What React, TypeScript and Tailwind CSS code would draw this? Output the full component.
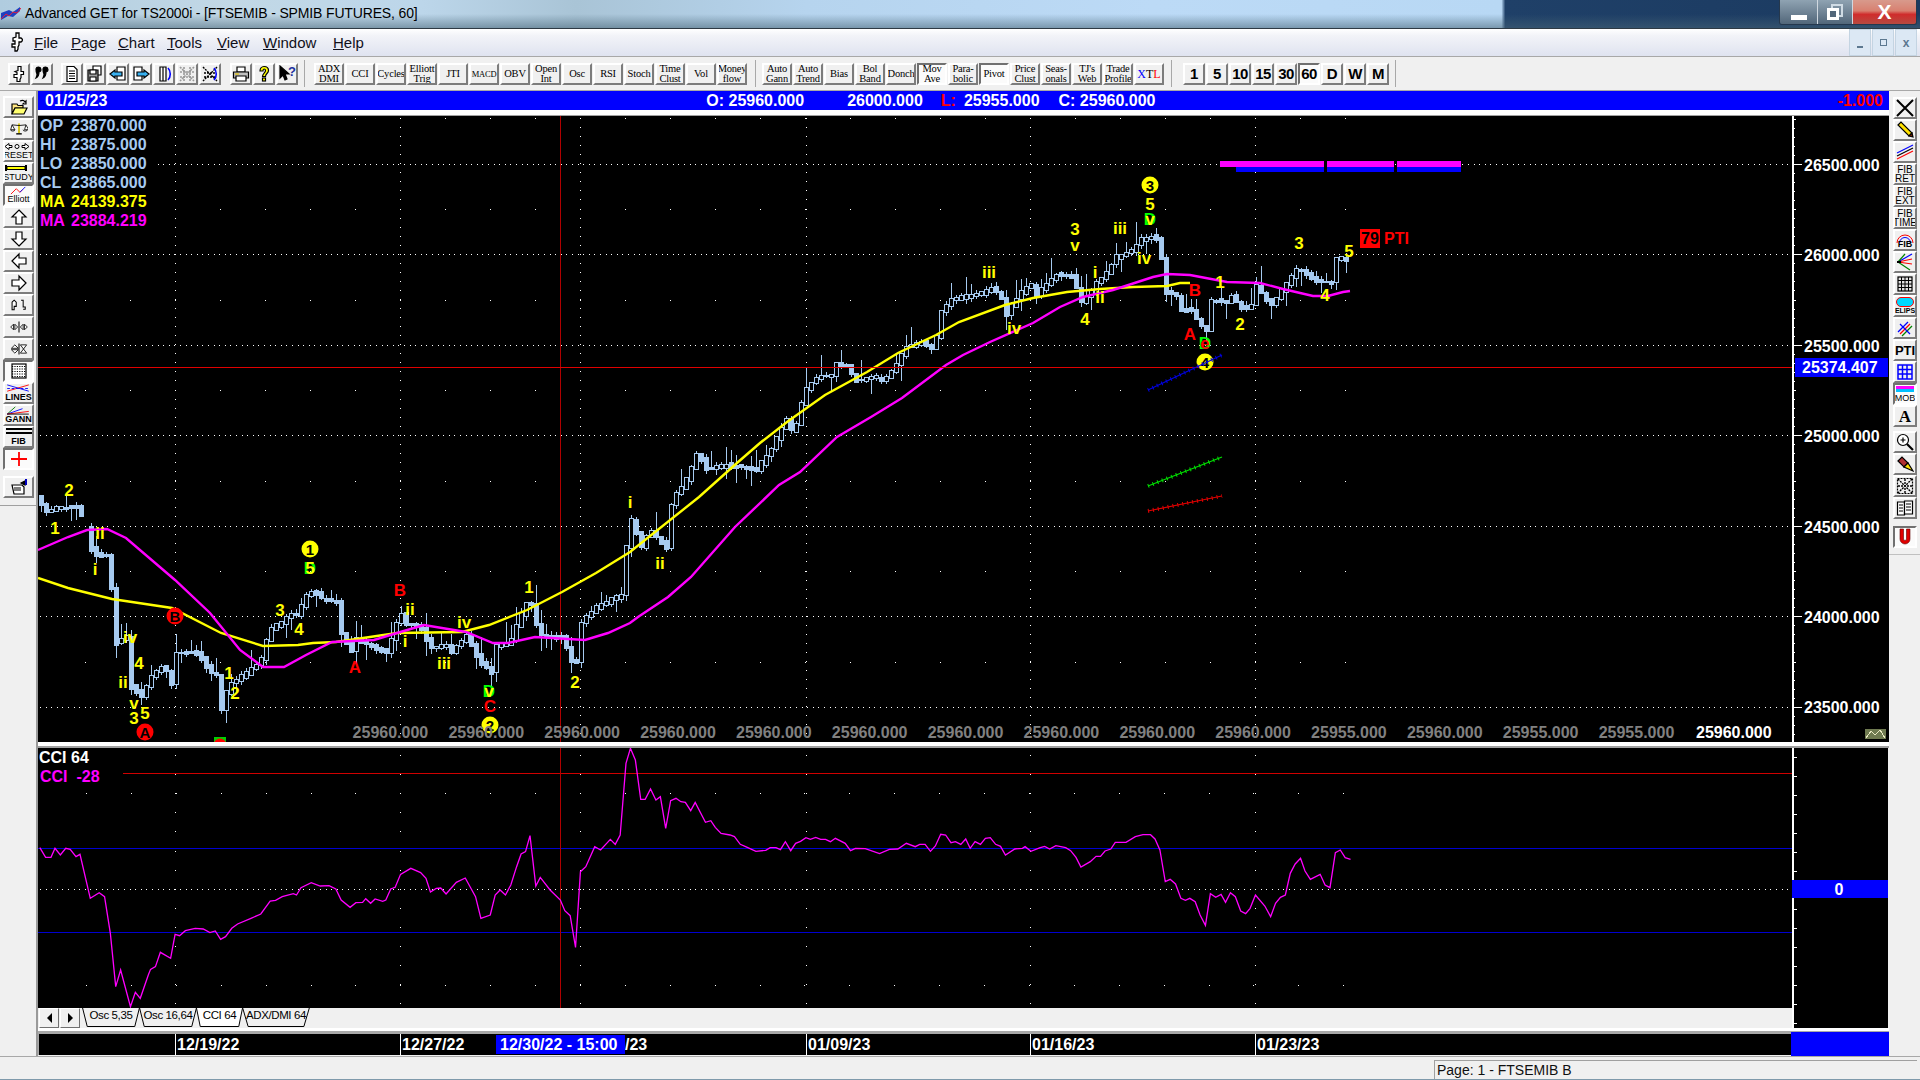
import type { ReactNode } from "react";

const FONT = "[font-family:'Liberation_Sans',Arial,sans-serif]";
const SERIF = "[font-family:'Liberation_Serif',serif]";
const STEEL = "#a6caf0";

const pts = (list: number[][], ox = 0, oy = 0, sx = 1, sy = 1) =>
  list.map(([x, y]) => [ox + x / sx, oy + y / sy]);
const toLine = (list: number[][]) => list.map((p) => p.join(",")).join(" ");

const pricePath = [
  [40, 503], [45, 512], [57, 507], [76, 508], [80, 512], [89, 538], [92, 555], [108, 555], [112, 600], [116, 643],
  [126, 637], [128, 668], [131, 687], [141, 697], [150, 677], [164, 665], [172, 687], [175, 653], [198, 653], [210, 673],
  [216, 675], [220, 717], [222, 700], [231, 683], [248, 672], [260, 662], [269, 630], [281, 622], [290, 615], [300, 615],
  [302, 597], [315, 590], [317, 597], [336, 603], [341, 633], [350, 653], [355, 640], [367, 645], [386, 652], [392, 637],
  [400, 610], [403, 623], [420, 627], [430, 648], [447, 645], [451, 652], [466, 635], [480, 663], [491, 672], [495, 647],
  [510, 643], [516, 625], [529, 598], [535, 620], [539, 635], [562, 638], [575, 670], [581, 623], [596, 607], [621, 595],
  [627, 538], [630, 517], [641, 547], [649, 530], [666, 548], [668, 513], [674, 497], [685, 482], [697, 453], [707, 470],
  [724, 465], [739, 467], [745, 467], [756, 470], [762, 462], [772, 447], [787, 417], [793, 437], [800, 407], [806, 388],
  [817, 377], [831, 375], [835, 363], [846, 367], [856, 380], [875, 378], [884, 380], [894, 368], [905, 347], [921, 342],
  [934, 350], [940, 313], [950, 300], [980, 294], [992, 288], [1000, 295], [1005, 317], [1010, 307], [1015, 300], [1030, 283],
  [1035, 297], [1043, 287], [1055, 275], [1073, 277], [1076, 288], [1080, 303], [1090, 293], [1095, 283], [1107, 272], [1115, 257],
  [1130, 252], [1140, 240], [1155, 235], [1160, 255], [1165, 273], [1166, 293], [1175, 293], [1180, 310], [1190, 310], [1200, 325],
  [1206, 330], [1210, 300], [1227, 303], [1230, 295], [1240, 307], [1250, 310], [1255, 285], [1270, 305], [1275, 300], [1290, 278],
  [1295, 270], [1305, 273], [1312, 280], [1325, 282], [1335, 283], [1336, 260], [1340, 258], [1350, 262],
];

const yellowMa = [
  [38, 578], [68, 588], [112, 599], [172, 608], [221, 633], [263, 646], [298, 645], [313, 643], [336, 642], [397, 633],
  [462, 632], [489, 625], [527, 610], [562, 592], [596, 573], [630, 552], [699, 497], [737, 463], [760, 443], [787, 422],
  [825, 395], [867, 372], [898, 353], [936, 335], [959, 322], [1005, 305], [1033, 298], [1067, 292], [1100, 289], [1133, 287],
  [1167, 286], [1180, 283], [1190, 283],
];

const magentaMa = [
  [38, 550], [68, 537], [87, 530], [107, 529], [126, 538], [175, 580], [210, 613], [240, 650], [263, 667], [284, 667],
  [306, 655], [332, 642], [374, 640], [397, 633], [424, 625], [466, 632], [493, 643], [508, 643], [535, 637], [585, 640],
  [608, 633], [630, 623], [638, 617], [668, 597], [691, 577], [735, 527], [779, 485], [800, 472], [837, 437], [871, 417],
  [902, 398], [946, 365], [963, 355], [990, 342], [1033, 323], [1060, 307], [1083, 297], [1113, 290], [1153, 277], [1167, 274],
  [1190, 275], [1227, 282], [1260, 283], [1283, 289], [1313, 296], [1328, 296], [1343, 292], [1350, 291],
];

const cciLeft = [
  [22, 323], [35, 352], [47, 352], [56, 325], [68, 345], [80, 325], [90, 328], [103, 350], [112, 343], [135, 475],
  [155, 458], [167, 470], [180, 580], [192, 740], [203, 690], [225, 800], [236, 757], [247, 775], [265, 705], [270, 688],
  [281, 680], [292, 637], [315, 655], [325, 583], [335, 587], [348, 572], [370, 565], [388, 567], [403, 578], [415, 573],
  [427, 598], [438, 590], [452, 565], [465, 552], [495, 535], [517, 522], [538, 483], [550, 481], [565, 470], [590, 461],
  [597, 465], [607, 443], [630, 428], [650, 438], [670, 437], [685, 447], [697, 480], [717, 502], [730, 488], [745, 487],
  [752, 476], [763, 490], [773, 477], [790, 484], [797, 480], [808, 447], [818, 442], [830, 403], [853, 385], [875, 398],
  [887, 415], [897, 456], [910, 445], [920, 444], [932, 462], [955, 427], [975, 414], [998, 470], [1010, 535], [1031, 525],
  [1042, 465], [1053, 450], [1065, 465], [1077, 435], [1090, 380], [1100, 342], [1110, 335], [1120, 287], [1133, 438], [1143, 412],
  [1165, 450], [1188, 480], [1198, 512], [1210, 527], [1222, 622], [1233, 395], [1245, 380], [1265, 320], [1278, 330], [1300, 298],
  [1311, 313], [1322, 285], [1335, 70], [1345, 25], [1356, 60], [1368, 178], [1378, 178], [1390, 147], [1402, 180], [1412, 170],
  [1424, 265], [1435, 182], [1447, 175], [1458, 185], [1468, 187], [1480, 212], [1490, 187], [1513, 247], [1525, 242], [1535, 262],
  [1548, 280], [1568, 285],
];

const cciRight = [
  [10, 290], [23, 313], [35, 320], [58, 334], [80, 331], [90, 323], [103, 323], [113, 329], [124, 305], [136, 332],
  [147, 310], [158, 304], [170, 293], [180, 298], [192, 292], [203, 298], [214, 298], [225, 305], [236, 295], [258, 310],
  [270, 332], [281, 325], [303, 326], [335, 341], [357, 328], [376, 327], [395, 310], [415, 320], [425, 313], [437, 313],
  [449, 334], [460, 318], [472, 283], [483, 285], [495, 308], [505, 305], [517, 313], [528, 297], [538, 325], [549, 305],
  [561, 313], [572, 295], [583, 293], [595, 313], [606, 319], [617, 345], [638, 327], [655, 325], [661, 320], [674, 334],
  [695, 323], [705, 319], [716, 327], [730, 317], [752, 323], [763, 332], [775, 352], [786, 381], [807, 365], [820, 349],
  [830, 349], [840, 333], [853, 327], [863, 307], [887, 307], [908, 290], [925, 284], [942, 284], [952, 297], [963, 330],
  [975, 425], [986, 418], [998, 432], [1010, 475], [1020, 481], [1030, 475], [1042, 485], [1053, 525], [1065, 556], [1076, 461],
  [1088, 472], [1100, 463], [1110, 487], [1121, 458], [1132, 470], [1144, 513], [1155, 521], [1165, 505], [1177, 465], [1198, 498],
  [1211, 530], [1222, 490], [1233, 472], [1244, 465], [1255, 400], [1266, 372], [1278, 355], [1288, 393], [1300, 418], [1322, 403],
  [1333, 435], [1344, 443], [1356, 338], [1367, 330], [1378, 353], [1390, 358],
];

const cciLine = [...pts(cciLeft, 30, 740, 2.24, 3), ...pts(cciRight, 730, 740, 2.24, 3)];

function priceAt(x: number) {
  for (let i = 1; i < pricePath.length; i++) {
    const [x0, y0] = pricePath[i - 1];
    const [x1, y1] = pricePath[i];
    if (x <= x1) return y0 + ((x - x0) / (x1 - x0 || 1)) * (y1 - y0);
  }
  return pricePath[pricePath.length - 1][1];
}

let seed = 11;
const rnd = () => (seed = (seed * 16807) % 2147483647) / 2147483647;

const candles: { x: number; top: number; bot: number; hi: number; lo: number; up: boolean }[] = [];
for (let x = 41; x <= 1350; x += 5) {
  if (x > 82 && x < 87) continue;
  const open = priceAt(x - 5);
  const close = priceAt(x);
  const top = Math.min(open, close) - rnd() * 2.5;
  const bot = Math.max(open, close, top + 1) + rnd() * 2.5;
  candles.push({
    x,
    top,
    bot,
    hi: top - (rnd() < 0.65 ? rnd() * 4 : rnd() * 22),
    lo: bot + (rnd() < 0.65 ? rnd() * 4 : rnd() * 16),
    up: close < open,
  });
}

type Wave = [string, number, number, string?];
const YEL = "#ffff00";
const RED = "#ff0000";
const waves: Wave[] = [
  ["2", 69, 490], ["1", 55, 528], ["ii", 100, 533], ["i", 95, 569], ["iv", 130, 637], ["4", 139, 663], ["ii", 123, 682],
  ["v", 134, 703], ["3", 134, 718], ["5", 145, 713], ["1", 229, 673], ["2", 235, 693], ["3", 280, 610], ["4", 299, 629],
  ["B", 400, 590, RED], ["ii", 410, 609], ["i", 405, 641], ["A", 355, 667, RED], ["iv", 464, 622], ["iii", 444, 663],
  ["C", 490, 706, RED], ["1", 529, 587], ["2", 575, 682], ["i", 630, 502], ["ii", 660, 563], ["iv", 1014, 328], ["4", 1085, 319],
  ["A", 1190, 334, RED], ["5", 1150, 204], ["3", 1075, 229], ["v", 1075, 245], ["iii", 1120, 228], ["iv", 1144, 258],
  ["i", 1095, 272], ["ii", 1100, 297], ["B", 1195, 290, RED], ["1", 1220, 282], ["2", 1240, 324], ["3", 1299, 243],
  ["4", 1325, 295], ["5", 1349, 251], ["iii", 989, 272],
];
const circled: [string, number, number, string][] = [
  ["1", 310, 549, YEL], ["B", 175, 616, RED], ["A", 145, 732, RED], ["2", 490, 725, YEL], ["3", 1150, 185, YEL], ["4", 1205, 362, YEL],
];
const overGreen: [string, number, number, string][] = [
  ["5", 310, 568, YEL], ["v", 489, 691, YEL], ["v", 1150, 219, YEL], ["e", 1205, 343, RED],
];

const hLines = [164, 254.5, 345, 435.5, 526, 616.5, 707];
const sparseRows = [118, 209, 300, 390, 481, 571, 662];
const vLines = [175, 400, 580, 806, 1030, 1255];
const stripValues = ["25960.000", "25960.000", "25960.000", "25960.000", "25960.000", "25960.000", "25960.000", "25960.000", "25960.000", "25960.000", "25955.000", "25960.000", "25955.000", "25955.000"];

function Hatched({ x1, y1, x2, y2, c }: { x1: number; y1: number; x2: number; y2: number; c: string }) {
  return (
    <g stroke={c}>
      <line x1={x1} y1={y1} x2={x2} y2={y2} strokeWidth={1.2} />
      <line x1={x1} y1={y1} x2={x2} y2={y2} strokeWidth={4} strokeDasharray="1 4" />
    </g>
  );
}

function MainChart() {
  return (
    <svg viewBox="38 116 1754 626" className={`block w-[1754px] h-[626px] ${FONT}`}>
      <g stroke="#fff" shapeRendering="crispEdges">
        {hLines.map((y) => (
          <line key={y} x1={40} x2={1788} y1={y} y2={y} strokeDasharray="1 4.6" />
        ))}
        {sparseRows.map((y) => (
          <line key={y} x1={85} x2={1347} y1={y} y2={y} strokeDasharray="1 44" />
        ))}
        {vLines.map((x) => (
          <line key={x} x1={x} x2={x} y1={118} y2={742} strokeDasharray="1 8.05" />
        ))}
      </g>
      <line x1={560} x2={560} y1={116} y2={742} stroke="#b00000" shapeRendering="crispEdges" />
      <g shapeRendering="crispEdges" stroke={STEEL}>
        {candles.map((c) => (
          <g key={c.x}>
            <line x1={c.x} x2={c.x} y1={c.hi} y2={c.lo} />
            <rect x={c.x - 2} y={c.top} width={4} height={c.bot - c.top} fill={c.up ? "#000" : STEEL} />
          </g>
        ))}
      </g>
      <polyline points={toLine(yellowMa)} fill="none" stroke="#ffff00" strokeWidth={2.4} />
      <polyline points={toLine(magentaMa)} fill="none" stroke="#ff00ff" strokeWidth={2.4} />
      <line x1={38} x2={1792} y1={367.5} y2={367.5} stroke="#e00000" shapeRendering="crispEdges" />
      <g shapeRendering="crispEdges">
        <rect x={1220} y={161} width={104} height={6} fill="#ff00ff" />
        <rect x={1236} y={167} width={88} height={5} fill="#0000ff" />
        <rect x={1327} y={161} width={67} height={6} fill="#ff00ff" />
        <rect x={1327} y={167} width={67} height={5} fill="#0000ff" />
        <rect x={1397} y={161} width={64} height={6} fill="#ff00ff" />
        <rect x={1397} y={167} width={64} height={5} fill="#0000ff" />
      </g>
      <g className="text-[17px] font-bold" textAnchor="middle" dominantBaseline="central">
        {overGreen.map(([t, x, y, c]) => (
          <g key={`${x}-${y}`}>
            <text x={x} y={y} fill="#00ff00">D</text>
            <text x={x} y={y} fill={c}>{t}</text>
          </g>
        ))}
        {waves.map(([t, x, y, c]) => (
          <text key={`${t}-${x}-${y}`} x={x} y={y} fill={c ?? YEL}>{t}</text>
        ))}
        {circled.map(([t, x, y, c]) => (
          <g key={`${x}-${y}`}>
            <circle cx={x} cy={y} r={8.5} fill={c} />
            <text x={x} y={y} fill="#000" className="text-[15px]">{t}</text>
          </g>
        ))}
      </g>
      <rect x={214} y={737} width={12} height={5} fill="#00d000" shapeRendering="crispEdges" />
      <circle cx={220} cy={745} r={6.5} fill="#ff0000" />
      <Hatched x1={1148} y1={390} x2={1222} y2={355} c="#0000e0" />
      <Hatched x1={1148} y1={486} x2={1222} y2={457} c="#00e000" />
      <Hatched x1={1148} y1={511} x2={1222} y2={496} c="#e00000" />
      <rect x={1360} y={229} width={20} height={19} fill="#ff0000" />
      <g className="text-[16px] font-bold">
        <text x={1370} y={244} textAnchor="middle" fill="#000">79</text>
        <text x={1384} y={244} fill="#ff0000">PTI</text>
      </g>
      <g className="text-[16px] font-bold" fill="#808080">
        {stripValues.map((v, i) => (
          <text key={i} x={352.6 + i * 95.85} y={738}>{v}</text>
        ))}
        <text x={1696} y={738} fill="#fff">25960.000</text>
      </g>
    </svg>
  );
}

function PriceAxis() {
  const ticks = Array.from({ length: 69 }, (_, i) => i);
  return (
    <svg viewBox="1792 116 96 626" className={`block w-[96px] h-[626px] ${FONT}`}>
      <line x1={1793} x2={1793} y1={116} y2={742} stroke="#fff" strokeWidth={2} />
      <g stroke="#fff" shapeRendering="crispEdges">
        {ticks.map((i) => (
          <line key={i} x1={1793} x2={i % 5 === 0 ? 1796 : 1795} y1={119 + i * 9.05} y2={119 + i * 9.05} />
        ))}
        {hLines.map((y) => (
          <line key={y} x1={1793} x2={1802} y1={y} y2={y} />
        ))}
      </g>
      <g className="text-[16px] font-bold" fill="#fff">
        {["26500.000", "26000.000", "25500.000", "25000.000", "24500.000", "24000.000", "23500.000"].map((v, i) => (
          <text key={v} x={1804} y={171 + i * 90.4}>{v}</text>
        ))}
      </g>
      <rect x={1795} y={358} width={93} height={19} fill="#0000ff" />
      <text x={1802} y={373} fill="#fff" className="text-[16px] font-bold">25374.407</text>
      <g shapeRendering="crispEdges">
        <rect x={1865} y={729} width={21} height={10} fill="#6f7a50" />
        <path d="M1866 738l5-7 4 4 5-5 5 8" fill="none" stroke="#e8e8c0" />
      </g>
    </svg>
  );
}

function CciChart() {
  return (
    <svg viewBox="38 748 1754 260" className={`block w-[1754px] h-[260px] ${FONT}`}>
      <g stroke="#fff" shapeRendering="crispEdges">
        <line x1={40} x2={1788} y1={889} y2={889} strokeDasharray="1 4.6" />
        {[793, 985].map((y) => (
          <line key={y} x1={86} x2={1347} y1={y} y2={y} strokeDasharray="1 43.9" />
        ))}
        {vLines.map((x) => (
          <line key={x} x1={x} x2={x} y1={755} y2={1008} strokeDasharray="1 18.1" />
        ))}
      </g>
      <g shapeRendering="crispEdges">
        <line x1={123} x2={1792} y1={773} y2={773} stroke="#d00000" />
        <line x1={38} x2={1792} y1={848} y2={848} stroke="#0000d0" />
        <line x1={38} x2={1792} y1={932} y2={932} stroke="#0000d0" />
        <line x1={560} x2={560} y1={748} y2={1008} stroke="#b00000" />
      </g>
      <polyline points={toLine(cciLine)} fill="none" stroke="#ff00ff" strokeWidth={1.3} />
      <g className="text-[16px] font-bold">
        <text x={39} y={763} fill="#fff">CCI 64</text>
        <text x={40} y={782} fill="#ff00ff" xmlSpace="preserve">CCI  -28</text>
      </g>
    </svg>
  );
}

function CciAxis() {
  const ticks = Array.from({ length: 15 }, (_, i) => i);
  return (
    <svg viewBox="1792 748 96 280" className={`block w-[96px] h-[280px] ${FONT}`}>
      <line x1={1793} x2={1793} y1={748} y2={1028} stroke="#fff" strokeWidth={2} />
      <g stroke="#fff" shapeRendering="crispEdges">
        {ticks.map((i) => (
          <line key={i} x1={1793} x2={1797} y1={757 + i * 19} y2={757 + i * 19} />
        ))}
      </g>
      <rect x={1791} y={880} width={97} height={18} fill="#0000ff" />
      <text x={1839} y={894.5} textAnchor="middle" fill="#fff" className="text-[16px] font-bold">0</text>
    </svg>
  );
}

function DateAxis() {
  const dates: [string, number][] = [["12/19/22", 177], ["12/27/22", 402], ["01/09/23", 808], ["01/16/23", 1032], ["01/23/23", 1257]];
  return (
    <svg viewBox="39 1034 1752 21" className={`block w-[1752px] h-[21px] ${FONT}`}>
      <rect x={39} y={1034} width={1752} height={21} fill="#000" />
      {dates.map(([d, x]) => (
        <g key={d}>
          <line x1={x - 2} x2={x - 2} y1={1034} y2={1055} stroke="#fff" shapeRendering="crispEdges" />
          <text x={x} y={1050} fill="#fff" className="text-[16px] font-bold">{d}</text>
        </g>
      ))}
      <text x={625} y={1050} fill="#fff" className="text-[16px] font-bold">/23</text>
      <rect x={496} y={1035} width={129} height={19} fill="#0000ff" />
      <text x={500} y={1050} fill="#fff" className="text-[16px] font-bold">12/30/22 - 15:00</text>
    </svg>
  );
}

function Btn({ w = "w-[22px]", pressed, children, className = "" }: { w?: string; pressed?: boolean; children?: ReactNode; className?: string }) {
  const look = pressed
    ? "border-t-[#707070] border-l-[#707070] border-r-white border-b-white bg-[#fbfbfb]"
    : "border-t-white border-l-white border-r-[#7c7c7c] border-b-[#7c7c7c] bg-[#f0f0f0]";
  return (
    <div className={`${w} h-[22px] shrink-0 border-2 overflow-hidden flex items-center justify-center text-black ${look} ${className}`}>
      {children}
    </div>
  );
}

const Ico = ({ children, vb = "0 0 18 18" }: { children: ReactNode; vb?: string }) => (
  <svg viewBox={vb} className="w-[18px] h-[18px] block" fill="none" stroke="#000" strokeWidth={1.2}>
    {children}
  </svg>
);

const dagger = "M7 1h3v5h2l2 2-2 2h-2v3l-1 2v2l-1 2H6v-4H3v-3h3V9H4V6l3-1z";

const topIcons: ReactNode[] = [
  <Ico><path d="M8 1.5h3v5h2.5v3H11v3l-1 2v2H7v-4H4v-3h3v-2l-2-1 3-1z" fill="#fff" /></Ico>,
  <Ico><path d="M3 4a2.5 2.5 0 1 1 3 3c0 3-1 5-3 6 1-2 1-3 1-4-1-1-1-3-1-5zM10 4a2.5 2.5 0 1 1 3 3c0 3-1 5-3 6 1-2 1-3 1-4-1-1-1-3-1-5z" fill="#000" /></Ico>,
  <Ico><path d="M4 1.5h7l3 3v12H4z" fill="#fff" /><path d="M6 6h6M6 8.5h6M6 11h6M6 13.5h6" /></Ico>,
  <Ico><path d="M7 1h8v9H7z" fill="#fff" /><path d="M2 5h10v11H2z" fill="#a0a0a0" /><path d="M4 5h6v4H4zM4 12h6v4H4z" fill="#fff" /></Ico>,
  <Ico><path d="M8 2h8v13H8z" fill="#fff" /><path d="M1 9l5-4v2h7v4H6v2z" fill="#38b0f0" /></Ico>,
  <Ico><path d="M2 2h8v13H2z" fill="#fff" /><path d="M17 9l-5-4v2H5v4h7v2z" fill="#38b0f0" /></Ico>,
  <Ico><path d="M5 2h6v14H5z" fill="#fff" /><path d="M8 2v14" /><path d="M13 3c3 3 3 9 0 12" stroke="#0000ff" strokeWidth={1.6} /></Ico>,
  <Ico><path d="M2 2l14 14M16 2L2 16M2 7h14M2 12h14M6 2v14M12 2v14" stroke="#9a9a9a" strokeDasharray="2 1" strokeWidth={1.6} /></Ico>,
  <Ico><path d="M2 2l14 14M16 2L2 16M3 8h12M3 12h12" strokeDasharray="2 1" strokeWidth={1.4} /><path d="M13 3c3 3 3 9 0 12" stroke="#0000ff" strokeWidth={1.6} /></Ico>,
  <Ico><path d="M5 2h8v5H5z" fill="#fff" /><path d="M1.5 7h15v6h-15z" fill="#c0c0c0" /><path d="M4 11h10v5H4z" fill="#fff" /><path d="M3 9h4" stroke="#e0c000" /></Ico>,
  <Ico><path d="M9 1.5c3 0 4.5 2 4.5 4 0 3-3 3-3 6h-3c0-3 3-3.500 3-6 0-1-.5-1.500-1.500-1.500S8 5 8 6H5c0-2.500 1.500-4.500 4-4.500z" fill="#ffff00" /><rect x={7.5} y={13} width={3} height={3} fill="#ffff00" /></Ico>,
  <Ico><path d="M2 1v12l3-3 2 5 2-1-2-5h4z" fill="#000" /><text x={10} y={11} fontSize={13} fontWeight={700} fill="#2030a0" stroke="none">?</text></Ico>,
];

const serifBtn = (label: string, pressed?: boolean) => (
  <Btn key={label} w="w-[30px]" pressed={pressed} className="mr-px">
    <span className={`${SERIF} ${label === "MACD" ? "text-[8.5px]" : "text-[10.5px]"} leading-[10px] text-center whitespace-pre-line tracking-[-0.2px]`}>{label}</span>
  </Btn>
);

function TopToolbar() {
  return (
    <div className="h-[30px] shrink-0 flex items-start pt-[3px] bg-[#f0f0f0]">
      <div className="flex gap-px pl-[8px]">{topIcons.slice(0, 2).map((ic, i) => <Btn key={i}>{ic}</Btn>)}</div>
      <div className="flex gap-px ml-[8px]">{topIcons.slice(2, 9).map((ic, i) => <Btn key={i}>{ic}</Btn>)}</div>
      <div className="flex gap-px ml-[9px]">{topIcons.slice(9).map((ic, i) => <Btn key={i}>{ic}</Btn>)}</div>
      <div className="ml-[6px] w-px h-[27px] -mt-[3px] bg-[#a8a8a8]" />
      <div className="flex ml-[9px]">
        {["ADX\nDMI", "CCI", "Cycles", "Elliott\nTrig", "JTI", "MACD", "OBV", "Open\nInt", "Osc", "RSI", "Stoch", "Time\nClust", "Vol", "Money\nflow"].map((l) => serifBtn(l))}
      </div>
      <div className="ml-[7px] w-px h-[27px] -mt-[3px] bg-[#a8a8a8]" />
      <div className="flex ml-[6px]">
        {["Auto\nGann", "Auto\nTrend", "Bias", "Bol\nBand", "Donch"].map((l) => serifBtn(l))}
        {serifBtn("Mov\nAve", true)}
        {serifBtn("Para-\nbolic")}
        {serifBtn("Pivot", true)}
        {["Price\nClust", "Seas-\nonals", "TJ's\nWeb", "Trade\nProfile"].map((l) => serifBtn(l))}
        <Btn w="w-[30px]">
          <span className={`${SERIF} text-[12px]`}>
            <span className="text-[#0000ff]">X</span>T<span className="text-[#ff0000]">L</span>
          </span>
        </Btn>
      </div>
      <div className="ml-[7px] w-px h-[27px] -mt-[3px] bg-[#a8a8a8]" />
      <div className="flex gap-px ml-[11px]">
        {["1", "5", "10", "15", "30", "60", "D", "W", "M"].map((l) => (
          <Btn key={l} pressed={l === "60"}>
            <span className={`${FONT} text-[15px] font-bold tracking-[-0.5px]`}>{l}</span>
          </Btn>
        ))}
      </div>
      <div className="ml-[6px] w-px h-[27px] -mt-[3px] bg-[#a8a8a8]" />
    </div>
  );
}

const small = `${FONT} text-[9px] leading-[9px] text-center`;
const arrow = (d: string) => <Ico><path d={d} fill="#fff" /></Ico>;

const leftTools: { key: string; node: ReactNode; pressed?: boolean }[] = [
  { key: "open", node: <Ico><path d="M2 6h5l1 1.500h5V10H5l-3 6z" fill="#ffe680" /><path d="M2 16l3-6h12l-3 6z" fill="#ffff70" /><path d="M10 3c2-1 4-1 5 1l1-1v3h-3l1-1" stroke="#000" /></Ico> },
  { key: "scales", node: <Ico vb="0 0 26 18"><path d="M13 1v14" stroke="#d0c000" strokeWidth={2.5} /><path d="M3 3l10 1 10-1" /><path d="M3 3L1 10h6zM23 3l-2 7h6z" fill="#fff" /><path d="M1 10a3 2 0 0 0 6 0M19 10a3 2 0 0 0 6 0" /><path d="M9 16h8" strokeWidth={2} /></Ico> },
  { key: "reset", node: <div className={small}><svg viewBox="0 0 26 9" className="w-[26px] h-[9px] block" fill="#fff" stroke="#000"><path d="M1 4.500l4-3v2h3v2H5v2zM25 4.500l-4-3v2h-3v2h3v2z" /><circle cx={13} cy={4.500} r={2} /></svg>RESET</div> },
  { key: "study", node: <div className={small}><svg viewBox="0 0 26 9" className="w-[26px] h-[9px] block"><path d="M3 1v6M23 1v6" stroke="#000" strokeWidth={2} /><rect x={4} y={2.500} width={18} height={3} fill="#ffff00" stroke="#000" /></svg>STUDY</div> },
  { key: "elliott", pressed: true, node: <div className={small}><svg viewBox="0 0 26 10" className="w-[26px] h-[9px] block" fill="none"><path d="M4 9l6-6 4 4 3-3" stroke="#ff0000" /><path d="M14 7l6-6" stroke="#0000ff" /></svg><span>Elliott</span></div> },
  { key: "up", node: arrow("M9 2l7 7h-4v7H6V9H2z") },
  { key: "down", node: arrow("M9 16l7-7h-4V2H6v7H2z") },
  { key: "left", node: arrow("M2 9l7-7v4h7v6H9v4z") },
  { key: "right", node: arrow("M16 9l-7-7v4H2v6h7v4z") },
  { key: "hgt", node: <Ico vb="0 0 26 18"><path d="M3 5l3-3 3 3v6H6v5H3zM16 2h3v10h3v3h-3" fill="#fff" strokeWidth={1.5} /></Ico> },
  { key: "wid", node: <Ico vb="0 0 26 18"><path d="M13 1v16" strokeWidth={1.5} /><path d="M1 9l4-4v8zM11 9L7 5v8zM15 9l4-4v8zM25 9l-4-4v8z" fill="#fff" /></Ico> },
  { key: "ver", node: <Ico vb="0 0 26 18"><path d="M13 1v16" strokeWidth={1.5} /><path d="M2 8l5-5 5 5zM2 10l5 5 5-5z" fill="#fff" /><path d="M15 3h9l-4.500 6 4.500 6h-9l4.500-6z" fill="#fff" /></Ico> },
  { key: "grid", pressed: true, node: <Ico><rect x={2} y={2} width={14} height={14} fill="#fff" /><path d="M2 4.500h14M2 7h14M2 9.500h14M2 12h14M2 14.500h14" strokeDasharray="1.200 1.200" strokeWidth={1.200} /></Ico> },
  { key: "lines", node: <div className={small}><svg viewBox="0 0 26 10" className="w-[26px] h-[9px] block" fill="none"><path d="M1 1l24 7" stroke="#0000ff" /><path d="M1 8l24-7" stroke="#ff0000" /><path d="M1 5l24 0" stroke="#0000ff" strokeDasharray="3 2" /></svg><span className="font-bold">LINES</span></div> },
  { key: "gann", node: <div className={small}><svg viewBox="0 0 26 10" className="w-[26px] h-[9px] block" fill="none"><path d="M1 9L10 1" stroke="#008000" /><path d="M1 9L18 3" stroke="#0000ff" /><path d="M1 9L25 6" stroke="#ff0000" /><path d="M1 9h24" stroke="#000" /></svg><span className="font-bold">GANN</span></div> },
  { key: "fib", node: <div className={small}><div className="w-[26px] h-[2px] bg-black mb-[2px]" /><div className="w-[26px] h-[2px] bg-black mb-[3px]" /><span className="font-bold">FIB</span></div> },
  { key: "cross", pressed: true, node: <Ico><path d="M9 2v14M1 9h16" stroke="#ff0000" strokeWidth={1.800} /></Ico> },
];

function LeftToolbar() {
  return (
    <div className="w-[38px] shrink-0 bg-[#f0f0f0] border-r-2 border-[#9a9a9a] flex flex-col pt-[5px]">
      <div className="flex flex-col gap-0 pl-[3px]">
        {leftTools.map((t) => (
          <Btn key={t.key} w="w-[31px]" pressed={t.pressed}>{t.node}</Btn>
        ))}
        <Btn w="w-[31px]" className="mt-[6px]">
          <Ico><path d="M2 7h10l2 2v7H4z" fill="#fff" /><path d="M4 10h7M4 12h7" /><path d="M11 5l4-2v4z" fill="#000" /><path d="M16 1v6" stroke="#0000c0" strokeWidth={2} /></Ico>
        </Btn>
      </div>
      <div className="h-px bg-[#a0a0a0] mt-[7px]" />
    </div>
  );
}

const fibLabel = (a: string, b: string) => (
  <div className={`${FONT} text-[10px] leading-[9px] text-center`}>{a}<br />{b}</div>
);

const rightTools: { key: string; node: ReactNode; pressed?: boolean; mt?: string }[] = [
  { key: "x", node: <Ico><path d="M1 1l16 16M17 1L1 17" strokeWidth={2} /></Ico> },
  { key: "pencil", node: <Ico><path d="M2 4l3-3 11 11-3 3z" fill="#ffe000" /><path d="M13 15l3-3 1 4z" fill="#802000" /></Ico> },
  { key: "chan", node: <Ico><path d="M1 10L17 2" stroke="#0000ff" /><path d="M1 13L17 5" stroke="#000" /><path d="M1 16L17 8" stroke="#ff0000" /></Ico> },
  { key: "ret", node: fibLabel("FIB", "RET") },
  { key: "ext", node: fibLabel("FIB", "EXT") },
  { key: "time", node: fibLabel("FIB", "TIME") },
  { key: "arc", node: <div className="relative w-[18px] h-[18px]"><svg viewBox="0 0 18 18" className="w-[18px] h-[18px] block" fill="none"><path d="M1 12a8 8 0 0 1 16 0" stroke="#ff0000" /><path d="M3.500 12a5.500 5.500 0 0 1 11 0" stroke="#0000ff" /></svg><span className={`${FONT} absolute inset-x-0 bottom-0 text-center text-[9px] leading-[9px] font-bold`}>FIB</span></div> },
  { key: "fan", node: <Ico><path d="M2 9L16 1" stroke="#0000ff" /><path d="M2 9L16 6" stroke="#ff0000" /><path d="M2 9L16 11" stroke="#ff0000" /><path d="M2 9L14 17" stroke="#008000" /><path d="M2 9L9 1" stroke="#008000" /><path d="M1 9h4" strokeWidth={2} /></Ico> },
  { key: "gridb", node: <Ico><rect x={2} y={2} width={14} height={14} fill="#e0e0e0" /><path d="M5.500 2v14M9 2v14M12.500 2v14M2 5.500h14M2 9h14M2 12.500h14" strokeWidth={1} /></Ico> },
  { key: "elips", node: <div className="flex flex-col items-center"><div className="w-[18px] h-[10px] rounded-full bg-[#00d8ff] border border-[#ff0000]" /><span className={`${FONT} text-[7px] leading-[8px] font-bold`}>ELIPS</span></div> },
  { key: "pitch", node: <Ico><path d="M2 13L12 3" stroke="#0000ff" /><path d="M4 15L14 5" stroke="#ff0000" /><path d="M6 17L16 7" stroke="#008000" /><path d="M4 5l10 10" stroke="#0000ff" /></Ico> },
  { key: "pti", node: <span className={`${FONT} text-[13px] leading-[15px] font-bold`}>PTI</span> },
  { key: "bgrid", node: <Ico><rect x={2} y={2} width={14} height={14} stroke="#0000ff" strokeWidth={1.500} /><path d="M6.500 2v14M11 2v14M2 6.500h14M2 11h14" stroke="#0000ff" strokeWidth={1.500} /></Ico> },
  { key: "mob", pressed: true, node: <div className="flex flex-col items-center w-[18px]"><div className="w-[18px] h-[3px] bg-[#ff00ff]" /><div className="w-[18px] h-[3px] bg-[#00c0ff] mb-px" /><span className={`${FONT} text-[9px] leading-[10px]`}>MOB</span></div> },
  { key: "a", node: <span className={`${SERIF} text-[17px] font-bold leading-[17px]`}>A</span> },
  { key: "zoom", mt: "mt-[4px]", node: <Ico><circle cx={7} cy={7} r={5.500} fill="#fff" /><path d="M7 4.500v5M4.500 7h5" /><path d="M11 11l6 6" strokeWidth={2.200} /></Ico> },
  { key: "erase", node: <Ico><path d="M2 6l4-4 6 6-4 4z" fill="#b03030" /><path d="M8 12l4-4 5 8z" fill="#ffe000" /></Ico> },
  { key: "dots", node: <Ico><path d="M2 2l14 14M16 2L2 16M2 9h14M9 2v14" strokeDasharray="2 1" strokeWidth={1.400} /><rect x={1.500} y={1.500} width={15} height={15} strokeDasharray="2 1" /></Ico> },
  { key: "pages", node: <Ico><path d="M1.500 3h7v13h-7z" fill="#fff" /><path d="M8.500 2h8v13h-8z" fill="#fff" /><path d="M3 6h4M3 9h4M3 12h4M10 5h5M10 8h5M10 11h5" strokeWidth={1} /></Ico> },
  { key: "u", mt: "mt-[7px]", pressed: true, node: <Ico><path d="M4 1v10a5 5 0 0 0 10 0V1h-3.500v10a1.500 1.500 0 0 1-3 0V1z" fill="#e00000" stroke="#600000" strokeWidth={0.600} /></Ico> },
];

function RightToolbar() {
  return (
    <div className="w-[31px] shrink-0 bg-[#f0f0f0] flex flex-col pt-[6px]">
      <div className="flex flex-col items-end pr-[3px]">
        {rightTools.map((t) => (
          <Btn key={t.key} w="w-[24px]" pressed={t.pressed} className={t.mt ?? ""}>{t.node}</Btn>
        ))}
      </div>
      <div className="h-px bg-[#c0c0c0] mt-[6px]" />
    </div>
  );
}

function Tab({ label, w, active }: { label: string; w: string; active?: boolean }) {
  return (
    <div className={`relative ${w} h-[19px] flex items-start justify-center pt-[0px] -mr-px`}>
      <svg viewBox="0 0 100 19" preserveAspectRatio="none" className="absolute inset-0 w-full h-full">
        <path d="M1 0L9 18.500H91L99 0" fill={active ? "#ffffff" : "#f0f0f0"} stroke="#000" strokeWidth={1} vectorEffect="non-scaling-stroke" />
      </svg>
      <span className={`relative ${FONT} text-[11.5px] leading-[15px] tracking-[-0.4px] text-black`}>{label}</span>
    </div>
  );
}

function TabBar() {
  const nav = "w-[20px] h-[20px] border border-t-white border-l-white border-r-[#707070] border-b-[#707070] flex items-center justify-center";
  return (
    <div className="h-[20px] flex items-start bg-[#f0f0f0] pl-[1px]">
      <div className={nav}><div className="w-0 h-0 border-y-[5px] border-y-transparent border-r-[5px] border-r-black" /></div>
      <div className={`${nav} ml-px`}><div className="w-0 h-0 border-y-[5px] border-y-transparent border-l-[5px] border-l-black" /></div>
      <div className="flex ml-[2px]">
        <Tab label="Osc 5,35" w="w-[58px]" />
        <Tab label="Osc 16,64" w="w-[58px]" />
        <Tab label="CCI 64" w="w-[47px]" active />
        <Tab label="ADX/DMI 64" w="w-[68px]" />
      </div>
    </div>
  );
}

function TitleBar() {
  return (
    <div className="relative h-[28px] shrink-0 overflow-hidden bg-[linear-gradient(90deg,#b0ccdf_0%,#c2d8e6_12%,#bcd6ea_22%,#a9c4d6_30%,#b6d4ee_42%,#bcdaf6_60%,#b8d8f4_78.2%,#1f4068_78.4%,#1b3a60_100%)]">
      <div className="absolute inset-0 bg-[linear-gradient(180deg,transparent_50%,rgba(70,100,118,0.55)_100%)]" />
      <div className="relative flex items-center h-[26px] pl-[1px]">
        <svg viewBox="0 0 20 13" className="w-[20px] h-[13px] shrink-0">
          <path d="M0 13V6l8-3 4 2 7-5v4l-7 6-5-1z" fill="#2040c0" />
          <path d="M0 12l5-5 3 2 4-4 4 1 4-5" fill="none" stroke="#e02040" />
        </svg>
        <span className={`${FONT} ml-[4px] text-[14px] tracking-[-0.15px] text-black whitespace-nowrap`}>
          Advanced GET for TS2000i - [FTSEMIB - SPMIB FUTURES, 60]
        </span>
      </div>
      <div className="absolute top-0 right-[3px] h-[25px] flex rounded-b-[3px] border border-t-0 border-[#25384d] overflow-hidden">
        <div className="w-[38px] bg-[linear-gradient(180deg,#8fa3b2,#52677a)] border-r border-[#d0d8e0] flex items-end justify-center pb-[4px]">
          <div className="w-[16px] h-[5px] bg-white" />
        </div>
        <div className="w-[35px] bg-[linear-gradient(180deg,#8fa3b2,#52677a)] flex items-center justify-center border-r border-[#d0d8e0]">
          <div className="relative w-[16px] h-[16px]">
            <div className="absolute right-0 top-0 w-[12px] h-[13px] border-2 border-[#cfdbe4]" />
            <div className="absolute left-0 bottom-0 w-[12px] h-[12px] border-[3px] border-white bg-[#52677a]" />
          </div>
        </div>
        <div className="w-[63px] bg-[linear-gradient(180deg,#d89a8c_0%,#d88070_45%,#d02c2c_60%,#b84a40_100%)] flex items-center justify-center">
          <span className={`${FONT} text-white text-[21px] font-bold leading-[24px]`}>X</span>
        </div>
      </div>
    </div>
  );
}

function MenuBar() {
  const items = [["F", "ile", "w-[37px]"], ["P", "age", "w-[47px]"], ["C", "hart", "w-[49px]"], ["T", "ools", "w-[50px]"], ["V", "iew", "w-[46px]"], ["W", "indow", "w-[70px]"], ["H", "elp", ""]];
  const winBtn = "w-[22px] h-[27px] border border-[#c4d4e2] bg-[#dce8f4] flex items-center justify-center text-[#5c7890]";
  return (
    <div className="h-[28px] shrink-0 border-t border-[#2e3a44] flex items-center bg-[linear-gradient(180deg,#ffffff_0%,#f2f3f8_25%,#dfe3f0_100%)]">
      <svg viewBox="0 0 14 22" className="w-[14px] h-[22px] ml-[9px] mt-[1px]">
        <path d={dagger} fill="#fff" stroke="#000" strokeWidth={1.3} />
      </svg>
      <div className="flex ml-[11px] mt-[2px]">
        {items.map(([a, b, w]) => (
          <span key={a} className={`${FONT} ${w} text-[15px] text-[#10101a]`}>
            <span className="underline">{a}</span>{b}
          </span>
        ))}
      </div>
      <div className="ml-auto mr-[3px] flex gap-px">
        <div className={winBtn}><div className="w-[6px] h-[2px] bg-[#5c7890] mt-[8px]" /></div>
        <div className={winBtn}><div className="w-[7px] h-[7px] border border-[#5c7890]" /></div>
        <div className={`${winBtn} font-bold text-[12px] ${FONT}`}>x</div>
      </div>
    </div>
  );
}

function Legend() {
  const rows = [
    ["OP", "23870.000", "text-[#a6caf0]"],
    ["HI", "23875.000", "text-[#a6caf0]"],
    ["LO", "23850.000", "text-[#a6caf0]"],
    ["CL", "23865.000", "text-[#a6caf0]"],
    ["MA", "24139.375", "text-[#ffff00]"],
    ["MA", "23884.219", "text-[#ff00ff]"],
  ];
  return (
    <div className={`absolute left-[2px] top-0 bg-black pr-[6px] ${FONT} text-[16px] font-bold leading-[19px]`}>
      {rows.map(([a, b, c]) => (
        <div key={b} className={`flex ${c}`}>
          <span className="w-[31px]">{a}</span>
          <span>{b}</span>
        </div>
      ))}
    </div>
  );
}

export default function App() {
  return (
    <div className={`w-[1920px] h-[1080px] flex flex-col overflow-hidden bg-[#f0f0f0] ${FONT}`}>
      <TitleBar />
      <MenuBar />
      <div className="h-[4px] shrink-0 bg-[#f0f0f0] border-t border-[#a8a8a8]" />
      <TopToolbar />
      <div className="flex h-[966px] shrink-0 border-t border-[#a8a8a8]">
        <LeftToolbar />
        <div className="w-[1851px] shrink-0 flex flex-col">
          <div className="h-[19px] shrink-0 bg-[#0000ff] flex items-center text-[16px] font-bold text-white">
            <span className="ml-[7px]">01/25/23</span>
            <span className="ml-[599px]">O: 25960.000</span>
            <span className="ml-[43px]">26000.000</span>
            <span className="ml-[18px] text-[#ff0000]">L:</span>
            <span className="ml-[8px]">25955.000</span>
            <span className="ml-[19px]">C: 25960.000</span>
            <span className="ml-auto mr-[6px] text-[#ff0000]">-1.000</span>
          </div>
          <div className="h-[5px] shrink-0 bg-white" />
          <div className="h-px shrink-0 bg-[#a0a0a0]" />
          <div className="relative flex h-[626px] shrink-0 bg-black">
            <MainChart />
            <PriceAxis />
            <Legend />
          </div>
          <div className="h-[4px] shrink-0 bg-white" />
          <div className="h-[2px] shrink-0 bg-[#a0a0a0]" />
          <div className="flex h-[280px] shrink-0">
            <div className="w-[1754px] flex flex-col bg-black">
              <CciChart />
              <TabBar />
            </div>
            <div className="bg-black"><CciAxis /></div>
          </div>
          <div className="h-[3px] shrink-0 bg-white" />
          <div className="h-[3px] shrink-0 bg-[#a8a8a8]" />
          <div className="flex h-[21px] shrink-0">
            <div className="w-[1px] bg-[#a8a8a8]" />
            <DateAxis />
            <div className="flex-1 bg-[#0000ff] -mt-[2px] h-[24px]" />
          </div>
        </div>
        <RightToolbar />
      </div>
      <div className="flex-1 flex flex-col border-t border-[#a8a8a8]">
        <div className="flex-1 flex justify-end pt-[3px] pr-[3px]">
          <div className={`w-[483px] border-t border-l border-[#a0a0a0] ${FONT} text-[14px] leading-[18px] pl-[2px] text-[#101010]`}>
            Page: 1 - FTSEMIB B
          </div>
        </div>
        <div className="h-[2px] shrink-0 bg-[#7f9aab]" />
      </div>
    </div>
  );
}
